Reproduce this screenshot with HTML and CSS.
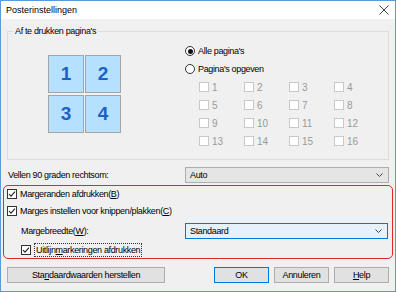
FILE: index.html
```html
<!DOCTYPE html>
<html lang="nl">
  <head>
    <meta charset="UTF-8" />
    <title>Posterinstellingen</title>
    <link rel="stylesheet" href="styles.css">
  </head>
  <body>
    <div class="window">
      <div class="titlebar">
        <span>Posterinstellingen</span>
        <svg class="close" width="10" height="10" viewBox="0 0 10 10">
          <path d="M0.5 0.5 L9.5 9.5 M9.5 0.5 L0.5 9.5" stroke="#444" stroke-width="1" fill="none" />
        </svg>
      </div>

      <div class="content">
        <fieldset class="group">
          <legend>Af te drukken pa<u>g</u>ina's</legend>
          <div class="tiles">
            <div class="tile">1</div>
            <div class="tile">2</div>
            <div class="tile">3</div>
            <div class="tile">4</div>
          </div>
          <div class="pages">
            <div class="radio-row"><span class="radio checked"></span>Alle pagina's</div>
            <div class="radio-row"><span class="radio"></span>Pagina's opgeven</div>
            <div class="page-grid">
              <div class="page"><span class="box"></span>1</div>
              <div class="page"><span class="box"></span>2</div>
              <div class="page"><span class="box"></span>3</div>
              <div class="page"><span class="box"></span>4</div>
              <div class="page"><span class="box"></span>5</div>
              <div class="page"><span class="box"></span>6</div>
              <div class="page"><span class="box"></span>7</div>
              <div class="page"><span class="box"></span>8</div>
              <div class="page"><span class="box"></span>9</div>
              <div class="page"><span class="box"></span>10</div>
              <div class="page"><span class="box"></span>11</div>
              <div class="page"><span class="box"></span>12</div>
              <div class="page"><span class="box"></span>13</div>
              <div class="page"><span class="box"></span>14</div>
              <div class="page"><span class="box"></span>15</div>
              <div class="page"><span class="box"></span>16</div>
            </div>
          </div>
        </fieldset>

        <div class="rotate">
          <span class="rotate-label">Vellen 90 graden rechtsom:</span>
          <div class="combo">
            <span>Auto</span>
            <svg width="7" height="4" viewBox="0 0 7 4"><path d="M0.5 0.5 L3.5 3.5 L6.5 0.5" stroke="#444" fill="none" /></svg>
          </div>
        </div>

        <div class="margins">
          <div class="check-row row1">
            <svg class="check" width="10" height="10" viewBox="0 0 10 10"><rect x="0.5" y="0.5" width="9" height="9" fill="#fff" stroke="#333" /><path d="M2 5 L4 7.2 L8 2.6" stroke="#222" stroke-width="1.1" fill="none" /></svg>
            <span>Margeranden afdrukken(<u>B</u>)</span>
          </div>
          <div class="check-row row2">
            <svg class="check" width="10" height="10" viewBox="0 0 10 10"><rect x="0.5" y="0.5" width="9" height="9" fill="#fff" stroke="#333" /><path d="M2 5 L4 7.2 L8 2.6" stroke="#222" stroke-width="1.1" fill="none" /></svg>
            <span>Marges instellen voor knippen/plakken(<u>C</u>)</span>
          </div>
          <div class="width-row">
            <span class="indent">Margebreedte(<u>W</u>):</span>
            <div class="combo focus">
              <span>Standaard</span>
              <svg width="7" height="4" viewBox="0 0 7 4"><path d="M0.5 0.5 L3.5 3.5 L6.5 0.5" stroke="#444" fill="none" /></svg>
            </div>
          </div>
          <div class="check-row row4 indent">
            <svg class="check" width="10" height="10" viewBox="0 0 10 10"><rect x="0.5" y="0.5" width="9" height="9" fill="#fff" stroke="#333" /><path d="M2 5 L4 7.2 L8 2.6" stroke="#222" stroke-width="1.1" fill="none" /></svg>
            <span class="focus-rect">Uitlijn<u>m</u>arkeringen afdrukken</span>
          </div>
        </div>

        <div class="buttons">
          <div class="btn wide">Sta<u>n</u>daardwaarden herstellen</div>
          <div class="btn default">OK</div>
          <div class="btn">Annuleren</div>
          <div class="btn"><u>H</u>elp</div>
        </div>
      </div>
    </div>
  </body>
</html>
```

FILE: styles.css
```css
body {
  margin: 0;
  font-family: "Liberation Sans", Arial, sans-serif;
  font-size: 9px;
  letter-spacing: -0.35px;
  color: #000;
  background: #fff;
}

.window {
  width: 396px;
  height: 292px;
  box-sizing: border-box;
  border: 1px solid #5a9ad8;
  background: #f0f0f0;
}

/* title bar */
.titlebar {
  height: 18px;
  background: #fff;
  display: flex;
  align-items: center;
  justify-content: space-between;
  padding: 0 6px 0 5px;
  letter-spacing: 0;
}

.content {
  padding: 6px 6px 0 6px;
}

/* group box */
.group {
  margin: 0;
  padding: 0 0 9px;
  border: 1px solid #dcdcdc;
  display: grid;
  grid-template-columns: 177px 1fr;
  align-items: center;
  min-width: 0;
}

.group legend {
  margin-left: 5px;
  padding: 0 2px;
  line-height: 12px;
}

.tiles {
  display: grid;
  grid-template-columns: 36px 36px;
  grid-auto-rows: 38px;
  gap: 2px 1px;
  padding-left: 40px;
}

.tile {
  box-sizing: border-box;
  border: 1px solid #a4a4a4;
  background: #b6e1fe;
  color: #1c62c6;
  font-size: 19px;
  font-weight: bold;
  letter-spacing: 0;
  display: flex;
  align-items: center;
  justify-content: center;
}

.pages {
  padding-top: 5px;
}

.radio-row {
  height: 18px;
  display: flex;
  align-items: center;
  gap: 3px;
}

.radio {
  width: 10px;
  height: 10px;
  box-sizing: border-box;
  border: 1px solid #333;
  border-radius: 50%;
  background: #fff;
  display: flex;
  align-items: center;
  justify-content: center;
}

.radio.checked::after {
  content: "";
  width: 5px;
  height: 5px;
  border-radius: 50%;
  background: #111;
}

.page-grid {
  display: grid;
  grid-template-columns: repeat(4, 45px);
  grid-auto-rows: 18px;
  padding-left: 14px;
}

.page {
  display: flex;
  align-items: center;
  gap: 3px;
  color: #9a9a9a;
  font-size: 10px;
  letter-spacing: 0;
}

.box {
  width: 10px;
  height: 10px;
  box-sizing: border-box;
  border: 1px solid #c8c8c8;
  background: #fff;
}

/* rotate row */
.rotate {
  display: grid;
  grid-template-columns: 178px 1fr;
  align-items: center;
  margin-top: 7px;
}

.rotate-label {
  padding-left: 1px;
}

.combo {
  height: 16px;
  box-sizing: border-box;
  border: 1px solid #adadad;
  background: #e5e5e5;
  display: flex;
  align-items: center;
  justify-content: space-between;
  padding: 0 5px 0 4px;
}

.combo.focus {
  background: #e5f1fb;
  border-color: #0078d7;
}

/* red highlighted block */
.margins {
  margin: 2px -4px 0;
  border: 1px solid #e3262f;
  border-radius: 5px;
  padding: 0 4px 0 3px;
}

.check-row {
  display: flex;
  align-items: center;
  gap: 3px;
}

.row1 { height: 16px; }
.row2 { height: 18px; }
.row4 { height: 16px; }

.width-row {
  height: 22px;
  display: grid;
  grid-template-columns: 178px 1fr;
  align-items: center;
}

.indent {
  padding-left: 14px;
}

.focus-rect {
  border: 1px dotted #333;
  padding: 1px 1px;
  line-height: 10px;
}

/* buttons */
.buttons {
  display: flex;
  gap: 5px;
  margin-top: 8px;
}

.btn {
  width: 55px;
  height: 16px;
  box-sizing: border-box;
  border: 1px solid #adadad;
  background: #e1e1e1;
  display: flex;
  align-items: center;
  justify-content: center;
}

.btn.wide {
  width: 158px;
  margin-right: auto;
}

.btn.default {
  border-color: #0078d7;
}
```
